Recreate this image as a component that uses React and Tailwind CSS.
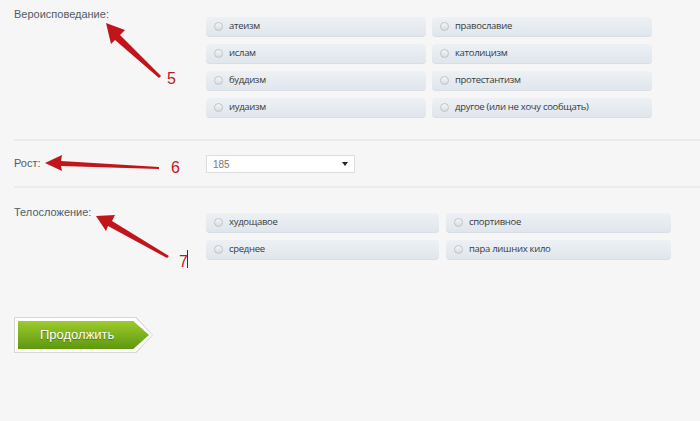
const religions = [
  ["атеизм", "православие"],
  ["ислам", "католицизм"],
  ["буддизм", "протестантизм"],
  ["иудаизм", "другое (или не хочу сообщать)"],
];

const builds = [
  ["худощавое", "спортивное"],
  ["среднее", "пара лишних кило"],
];

function Radio() {
  return (
    <span className="h-[9px] w-[9px] shrink-0 rounded-full border border-[#bfc4c9] bg-gradient-to-b from-[#f6f6f6] to-[#dadde0]" />
  );
}

function Pill({ label, width }) {
  return (
    <label
      className={`flex h-[20px] items-center gap-[6px] rounded-[4px] border-b border-[#d8dee5] bg-gradient-to-b from-[#edf1f5] to-[#e0e6ec] pl-[8px] text-[9.5px] tracking-[-0.3px] text-[#3a3a3a] ${width}`}
    >
      <Radio />
      <span>{label}</span>
    </label>
  );
}

function Arrows() {
  return (
    <svg
      className="pointer-events-none absolute left-0 top-0"
      width="700"
      height="421"
      viewBox="0 0 700 421"
    >
      <g fill="#c1151b">
        {/* 5 */}
        <polygon points="106,23 125,30 120,35 161,76 159,78 115,40 111,44" />
        {/* 6 */}
        <polygon points="45,163 62,155 61,161 159,167 159,169 61,166 62,171" />
        {/* 7 */}
        <polygon points="96,216 115,215 112,221 169,256 167,258 108,226 106,231" />
      </g>
      <g fill="#c1151b" fontFamily="Liberation Sans, Arial, sans-serif" fontSize="16">
        <text x="167" y="84">5</text>
        <text x="171" y="173">6</text>
        <text x="179" y="267">7</text>
      </g>
      <rect x="187" y="250" width="1" height="18" fill="#333" />
    </svg>
  );
}

export default function App() {
  return (
    <div className="relative h-[421px] w-[700px] overflow-hidden bg-[#f6f6f6] font-['Liberation_Sans',Arial,sans-serif] text-[11px] text-[#505d66]">
      <div className="flex pl-[14px]">
        <div className="w-[192px] pt-[6px]">Вероисповедание:</div>
        <div className="flex flex-col gap-[7px] pt-[17px] font-['Open_Sans',sans-serif]">
          {religions.map(([a, b]) => (
            <div key={a} className="flex gap-[6px]">
              <Pill label={a} width="w-[220px]" />
              <Pill label={b} width="w-[220px]" />
            </div>
          ))}
        </div>
      </div>

      <div className="ml-[14px] mt-[21px] h-[2px] bg-[#ebebeb]" />

      <div className="flex items-center pl-[14px] pt-[14px]">
        <div className="w-[192px] -translate-y-[1px]">Рост:</div>
        <div className="flex h-[18px] w-[149px] items-center justify-between border border-[#dcdcdc] bg-white pl-[6px] pr-[6px] text-[10px] text-[#777]">
          <span>185</span>
          <span className="h-0 w-0 border-l-[3.5px] border-r-[3.5px] border-t-[4px] border-l-transparent border-r-transparent border-t-[#222]" />
        </div>
      </div>

      <div className="ml-[14px] mt-[13px] h-[2px] bg-[#ebebeb]" />

      <div className="flex pl-[14px]">
        <div className="w-[192px] pt-[16px]">Телосложение:</div>
        <div className="flex flex-col gap-[7px] pt-[25px] font-['Open_Sans',sans-serif]">
          {builds.map(([a, b]) => (
            <div key={a} className="flex gap-[7px]">
              <Pill label={a} width="w-[233px]" />
              <Pill label={b} width="w-[225px]" />
            </div>
          ))}
        </div>
      </div>

      <div className="ml-[14px] mt-[57px] h-[36px] w-[139px] bg-[#d6d6d6] p-[1px] [clip-path:polygon(0_0,88%_0,100%_50%,88%_100%,0_100%)]">
        <div className="h-full w-full bg-white p-[3px] [clip-path:polygon(0_0,88%_0,100%_50%,88%_100%,0_100%)]">
          <div className="flex h-full w-full items-center bg-gradient-to-b from-[#9ccb2c] to-[#5e980e] pl-[22px] text-[13px] text-white [clip-path:polygon(0_0,88%_0,100%_50%,88%_100%,0_100%)] [text-shadow:0_1px_1px_rgba(0,0,0,0.35)]">
            Продолжить
          </div>
        </div>
      </div>

      <Arrows />
    </div>
  );
}
